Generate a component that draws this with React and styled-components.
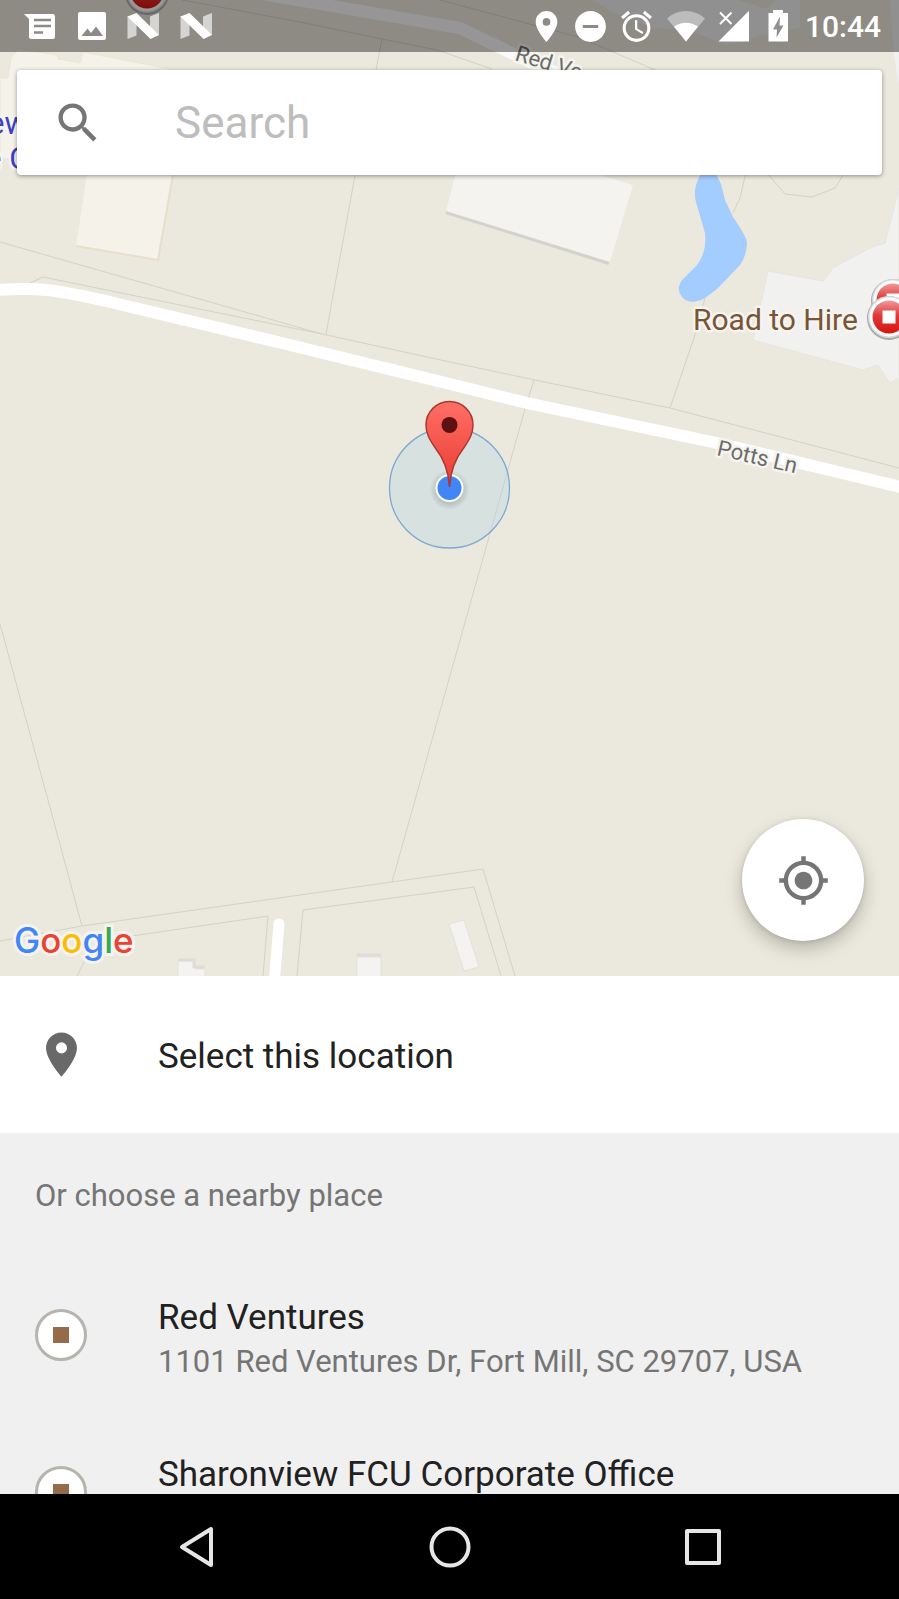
import React from "react";
import styled, { createGlobalStyle } from "styled-components";
import {
  MdAccessAlarm,
  MdDoNotDisturbOn,
  MdLocationOn,
  MdMyLocation,
  MdSearch,
} from "react-icons/md";

const GlobalStyle = createGlobalStyle`
  *, *::before, *::after { box-sizing: border-box; }
  body {
    margin: 0;
    font-family: Roboto, "Liberation Sans", sans-serif;
    color: #212121;
    background: #000;
  }
  button {
    font: inherit;
    color: inherit;
    border: 0;
    padding: 0;
    background: none;
    cursor: pointer;
  }
`;

const Screen = styled.div`
  height: 100vh;
  display: grid;
  grid-template-rows: minmax(0, 976fr) minmax(0, 518fr) auto;
`;

const MapArea = styled.section`
  position: relative;
  min-height: 0;
  overflow: hidden;
  background: #ebe8dd;
`;

const MapCanvas = styled.svg`
  position: absolute;
  inset: 0;
  width: 100%;
  height: 100%;
  display: block;
`;

const MapOverlay = styled.div`
  position: relative;
  height: 100%;
  display: flex;
  flex-direction: column;
`;

const StatusBar = styled.header`
  display: flex;
  justify-content: space-between;
  align-items: center;
  height: 52px;
  padding: 0 18px 0 24px;
  background: rgba(0, 0, 0, 0.4);
  color: #fff;
`;

const StatusGroup = styled.div`
  display: flex;
  align-items: center;
  gap: ${(p) => p.$gap}px;
`;

const StatusIcon = styled.span`
  display: flex;
  justify-content: center;
  width: ${(p) => p.$width}px;
  svg {
    flex: none;
    display: block;
  }
`;

const Clock = styled.time`
  padding: 2px 0 0 2px;
  font-size: 30px;
  font-weight: 500;
  line-height: 36px;
`;

const SearchBox = styled.label`
  display: flex;
  align-items: center;
  gap: 71px;
  height: 105px;
  margin: 18px 17px 0;
  padding: 0 35px;
  border-radius: 4px;
  background: #fff;
  box-shadow: 0 1px 4px rgba(0, 0, 0, 0.4);
  color: #757575;
  svg {
    flex: none;
  }
`;

const SearchInput = styled.input`
  flex: 1;
  min-width: 0;
  border: 0;
  outline: 0;
  padding: 0;
  background: none;
  font: 400 44px/52px Roboto, "Liberation Sans", sans-serif;
  color: #212121;
  &::placeholder {
    color: #bdbdbd;
    opacity: 1;
  }
`;

const MapFooter = styled.div`
  display: flex;
  justify-content: space-between;
  align-items: flex-end;
  margin-top: auto;
  padding: 0 35px 12px 14px;
`;

const GoogleMark = styled.span`
  font: 500 35px/48px Inter, Roboto, sans-serif;
  paint-order: stroke fill;
  -webkit-text-stroke: 6px #f4f3ee;
`;

const Letter = styled.span`
  color: ${(p) => p.$color};
`;

const LocateButton = styled.button`
  display: grid;
  place-items: center;
  width: 122px;
  height: 122px;
  margin-bottom: 23px;
  border-radius: 50%;
  background: #fff;
  color: #757575;
  box-shadow: 0 8px 18px rgba(0, 0, 0, 0.22), 0 1px 4px rgba(0, 0, 0, 0.12);
`;

const Sheet = styled.main`
  min-height: 0;
  overflow: hidden;
  background: #f0f0f0;
`;

const Row = styled.button`
  display: flex;
  align-items: center;
  gap: 71px;
  width: 100%;
  height: 157px;
  padding: 0 35px;
  text-align: left;
  background: ${(p) => (p.$primary ? "#fff" : "transparent")};
`;

const RowIcon = styled.span`
  flex: none;
  display: flex;
  justify-content: center;
  width: 52px;
  color: #696969;
  svg {
    flex: none;
  }
`;

const RowTitle = styled.span`
  display: block;
  font-size: 35px;
  line-height: 44px;
  white-space: nowrap;
`;

const RowDetail = styled.span`
  display: block;
  font-size: 31px;
  line-height: 44px;
  color: #757575;
  white-space: nowrap;
`;

const RowText = styled.span`
  min-width: 0;
  padding-top: ${(p) => (p.$twoLine ? 10 : 4)}px;
`;

const SectionTitle = styled.h2`
  margin: 0;
  padding: 41px 35px 38px;
  font-size: 31px;
  font-weight: 400;
  line-height: 44px;
  color: #757575;
`;

const PlaceBadge = styled.span`
  display: grid;
  place-items: center;
  width: 52px;
  height: 52px;
  border: 3px solid #b5b4ae;
  border-radius: 50%;
  background: #fff;
  &::before {
    content: "";
    width: 16px;
    height: 16px;
    background: #966b49;
  }
`;

const PlaceList = styled.ul`
  margin: 0;
  padding: 0;
  list-style: none;
`;

const NavBar = styled.nav`
  display: flex;
  justify-content: center;
  align-items: center;
  gap: 205px;
  height: 105px;
  background: #000;
`;

const NavButton = styled.button`
  width: 48px;
  height: 48px;
  svg {
    display: block;
    fill: none;
    stroke: #e6e6e6;
    stroke-width: 4;
    stroke-linejoin: round;
  }
`;

const MapLabel = styled.text`
  font-family: Roboto, "Liberation Sans", sans-serif;
  font-size: ${(p) => p.$size}px;
  fill: ${(p) => p.$color};
  stroke: #f5f4ef;
  stroke-width: 5px;
  stroke-linejoin: round;
  paint-order: stroke;
`;

function PlaceMarker({ x, y }) {
  return (
    <g transform={`translate(${x} ${y})`}>
      <circle cy="1" r="22" fill="#a9a9a9" />
      <circle r="21" fill="#d9d9d9" />
      <circle r="19.5" fill="#fff" />
      <circle r="16.5" fill="url(#markerRed)" />
      <rect x="-6.5" y="-6.5" width="13" height="13" fill="#fff" />
    </g>
  );
}

function MapDrawing() {
  return (
    <MapCanvas viewBox="0 0 899 976" preserveAspectRatio="xMidYMid slice" aria-label="Map">
      <defs>
        <linearGradient id="markerRed" x1="0" y1="0" x2="0" y2="1">
          <stop offset="0" stopColor="#f09a9a" />
          <stop offset="0.45" stopColor="#e03a3a" />
          <stop offset="1" stopColor="#d8140f" />
        </linearGradient>
        <linearGradient id="pinRed" x1="0" y1="0" x2="0" y2="1">
          <stop offset="0" stopColor="#ff6f66" />
          <stop offset="1" stopColor="#ea3b33" />
        </linearGradient>
        <radialGradient id="dotShadow">
          <stop offset="0.6" stopColor="#000" stopOpacity="0.16" />
          <stop offset="1" stopColor="#000" stopOpacity="0" />
        </radialGradient>
      </defs>

      {/* buildings */}
      <path
        d="M0 78H8L11 58 18 49 57 55 58 59 80 63 83 52 180 71V90H20V180H0Z"
        fill="#f5f2ea"
        stroke="#ece6d8"
      />
      <path d="M0 158H20V182H0Z" fill="#ebe8dd" />
      <path d="M88 168H173L158 260 76 246Z" fill="#f5f2ea" />
      <path d="M173 175L158 260 76 246" fill="none" stroke="#e6dfcc" strokeWidth="2" />
      <path d="M446 212L609 263" stroke="#d3d2cc" strokeWidth="4" />
      <path d="M457 168L578 168 633 185 610 262 446 211Z" fill="#f4f3f0" />
      <path d="M593 0L612 12 653 28 690 30 725 45 746 41 760 35 800 28V0Z" fill="#f0f0f1" />
      <path d="M738 0L766 9 776 0Z" fill="#ebe8dd" />
      <path d="M890 0H899V85L895 62 893 45Z" fill="#f1f1f0" />
      <path
        d="M899 188L885 243 872 247 833 268 823 281 768 271 753 340 863 370 878 365 890 383 899 378Z"
        fill="#f1f1f0"
        stroke="#e6e5e0"
      />
      <g fill="#f4f3f1" stroke="#e2e1dc">
        <path d="M178 980V961H194L196 969H205V980Z" />
        <path d="M357 980V957H381V980Z" />
        <path d="M449 924L464 920 479 967 464 971Z" />
      </g>
      <path d="M178 960H194V967H205M357 955H381" fill="none" stroke="#dddcd6" strokeWidth="3" />

      {/* parcel lines */}
      <g fill="none" stroke="#d3d2c7" strokeWidth="1">
        <path d="M182 0L300 22 382 39 437 50 492 69M382 39L375 75M440 0L578 37 660 72" />
        <path d="M0 242L322 334M30 283L43 277 322 334 450 362 535 380 670 408 899 468" />
        <path d="M356 170L326 334M534 380L525 409 480 569 392 882" />
        <path d="M670 408L695 335 705 298M733 213L740 198 746 172" />
        <path d="M766 172L785 194 812 197 835 188 845 172" />
        <path d="M0 624L48 800 82 926M0 941L82 926 483 869 515 976" />
        <path d="M86 958L77 976M132 936L268 916 263 976M297 976L303 910 474 887 501 976" />
      </g>

      {/* water */}
      <path
        d="M702 172Q692 188 696 202L705 233Q707 252 697 265L683 279Q675 289 682 297 690 306 705 298L717 289 740 265Q747 255 747 242 746 236 733 217L725 200 721 184 715 172Z"
        fill="#a3ccff"
      />

      {/* roads */}
      <g fill="none" stroke="#fff">
        <path d="M262 -6L460 28 530 62 600 90" strokeWidth="12" stroke="#fbfbfb" />
        <path
          d="M-5 290C45 287 60 291 106 301C150 311 220 328 290 345L450 384 527 403 717 443 905 488"
          strokeWidth="12"
        />
        <path d="M279 924L274 985" strokeWidth="11" strokeLinecap="round" />
      </g>

      {/* labels */}
      <MapLabel $size={22} $color="#6b6b6b" transform="translate(514 60) rotate(17)">
        Red Ve
      </MapLabel>
      <MapLabel $size={31} $color="#3f41bd" x="-12" y="134">ew</MapLabel>
      <MapLabel $size={31} $color="#3f41bd" x="-15" y="169">e C</MapLabel>
      <MapLabel $size={22} $color="#6b6b6b" transform="translate(716 455) rotate(13)">
        Potts Ln
      </MapLabel>
      <MapLabel $size={30} $color="#795437" x="693" y="330">Road to Hire</MapLabel>
      <PlaceMarker x={147} y={-8} />
      <PlaceMarker x={893} y={300} />
      <PlaceMarker x={889} y={317} />

      {/* current position and chosen point */}
      <circle cx="449.5" cy="488" r="60" fill="#a9d1e8" fillOpacity="0.3" stroke="#7ba9d2" strokeWidth="1.3" />
      <circle cx="449.5" cy="490" r="20" fill="url(#dotShadow)" />
      <circle cx="449.5" cy="488" r="14" fill="#fff" />
      <circle cx="449.5" cy="488" r="12" fill="#4285f4" />
      <path
        d="M449.5 487C448.500 470 444 459 436 449C429 439 426 433 426 425A23.500 23.500 0 0 1 473 425C473 433 470 439 463 449C455 459 450.500 470 449.500 487Z"
        fill="url(#pinRed)"
        stroke="#ad3733"
        strokeWidth="1.5"
      />
      <circle cx="449.5" cy="425" r="8" fill="#5c1212" />
    </MapCanvas>
  );
}

function MessageIcon() {
  return (
    <svg width="32" height="32" viewBox="0 0 32 32">
      <path fill="#fff" d="M0 4H29Q31 4 31 6.500V26.500Q31 29 28.500 29H7.500Q5 29 5 26.500V9Z" />
      <path stroke="#8c8b86" strokeWidth="2.500" d="M10 10H27M10 16H27M10 22.500H19" />
    </svg>
  );
}

function ImageIcon() {
  return (
    <svg width="29" height="32" viewBox="0 0 29 32">
      <rect x="1" y="2" width="28" height="28" rx="2" fill="#fff" />
      <path fill="#8c8b86" d="M4.500 26L10.500 18.500 14 23 19 16.500 26 26Z" />
    </svg>
  );
}

function NougatIcon() {
  return (
    <svg width="32" height="32" viewBox="0 0 32 32">
      <path fill="#d4d4d2" d="M0.500 6L9.500 9V25.500L0.500 29ZM23 6.500L32 3V25L23 18Z" />
      <path fill="#fff" d="M0.500 6.500L9.500 3 32 25 23.500 29Z" />
    </svg>
  );
}

function WifiIcon() {
  return (
    <svg width="42" height="37" viewBox="0 0 42 37">
      <path fill="#fff" fillOpacity="0.4" d="M21 33.500L2 10.500Q10 3 21 3T40 10.500Z" />
      <path fill="#fff" d="M21 33.500L9 18.500Q14.500 14.700 21 14.700T33 18.500Z" />
    </svg>
  );
}

function SignalIcon() {
  return (
    <svg width="38" height="37" viewBox="0 0 38 37">
      <path fill="#fff" d="M3.500 33.500L34 2.700V33.500Z" />
      <path stroke="#fff" strokeWidth="2" d="M5 4.500L16.500 16M16.500 4.500L5 16" />
    </svg>
  );
}

function BatteryIcon() {
  return (
    <svg width="34" height="37" viewBox="0 0 34 37">
      <path
        fill="#fff"
        fillRule="evenodd"
        d="M12 2H22V5H27V33.500H7.500V5H12ZM19 8.500L12 21.500H16L15.500 29.500 22.500 17.500H18.500Z"
      />
    </svg>
  );
}

const places = [
  { name: "Red Ventures", address: "1101 Red Ventures Dr, Fort Mill, SC 29707, USA" },
  { name: "Sharonview FCU Corporate Office", address: "" },
];

const googleLetters = [
  ["G", "#4285f4"],
  ["o", "#ea4335"],
  ["o", "#fbbc05"],
  ["g", "#4285f4"],
  ["l", "#34a853"],
  ["e", "#ea4335"],
];

export default function App() {
  return (
    <Screen>
      <GlobalStyle />
      <MapArea>
        <MapDrawing />
        <MapOverlay>
          <StatusBar>
            <StatusGroup $gap={21}>
              <MessageIcon />
              <ImageIcon />
              <NougatIcon />
              <NougatIcon />
            </StatusGroup>
            <StatusGroup $gap={8}>
              <StatusIcon $width={36}><MdLocationOn size={37} /></StatusIcon>
              <StatusIcon $width={36}><MdDoNotDisturbOn size={37} /></StatusIcon>
              <StatusIcon $width={40}><MdAccessAlarm size={37} /></StatusIcon>
              <StatusIcon $width={42}><WifiIcon /></StatusIcon>
              <StatusIcon $width={38}><SignalIcon /></StatusIcon>
              <StatusIcon $width={34}><BatteryIcon /></StatusIcon>
              <Clock>10:44</Clock>
            </StatusGroup>
          </StatusBar>
          <SearchBox>
            <MdSearch size={52} aria-hidden="true" />
            <SearchInput type="text" placeholder="Search" aria-label="Search" />
          </SearchBox>
          <MapFooter>
            <GoogleMark>
              {googleLetters.map(([letter, color], i) => (
                <Letter key={i} $color={color}>{letter}</Letter>
              ))}
            </GoogleMark>
            <LocateButton aria-label="My location">
              <MdMyLocation size={53} />
            </LocateButton>
          </MapFooter>
        </MapOverlay>
      </MapArea>

      <Sheet>
        <Row $primary>
          <RowIcon><MdLocationOn size={53} /></RowIcon>
          <RowText>
            <RowTitle>Select this location</RowTitle>
          </RowText>
        </Row>
        <SectionTitle>Or choose a nearby place</SectionTitle>
        <PlaceList>
          {places.map((place) => (
            <li key={place.name}>
              <Row>
                <RowIcon><PlaceBadge /></RowIcon>
                <RowText $twoLine>
                  <RowTitle>{place.name}</RowTitle>
                  <RowDetail>{place.address || "\u00a0"}</RowDetail>
                </RowText>
              </Row>
            </li>
          ))}
        </PlaceList>
      </Sheet>

      <NavBar>
        <NavButton aria-label="Back">
          <svg width="48" height="48" viewBox="0 0 48 48">
            <path d="M9 24L38 6V42Z" />
          </svg>
        </NavButton>
        <NavButton aria-label="Home">
          <svg width="48" height="48" viewBox="0 0 48 48">
            <circle cx="24" cy="24" r="18.500" />
          </svg>
        </NavButton>
        <NavButton aria-label="Recent apps">
          <svg width="48" height="48" viewBox="0 0 48 48">
            <rect x="8" y="8" width="32" height="32" />
          </svg>
        </NavButton>
      </NavBar>
    </Screen>
  );
}
